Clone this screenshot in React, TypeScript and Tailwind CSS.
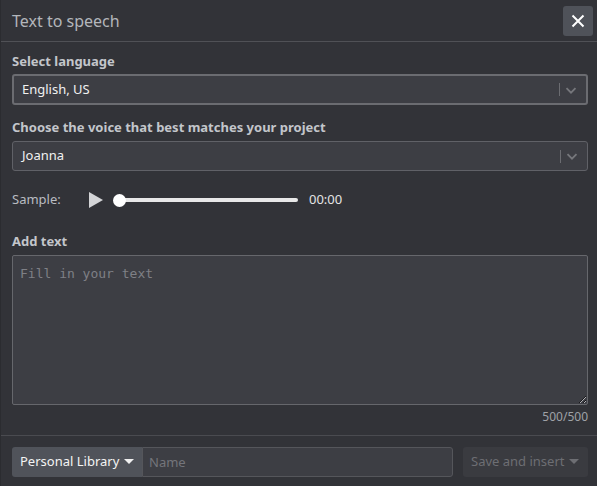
import React from "react";

const font = { fontFamily: '"Segoe UI", "Noto Sans", sans-serif' };

function Chevron() {
  return (
    <div className="flex items-center h-full pr-[6px]">
      <div className="w-px h-[13px] bg-[#6b6c71]" />
      <svg width="18" height="18" viewBox="0 0 20 20" className="ml-[2px]">
        <path d="M5 8 L10 13 L15 8" fill="none" stroke="#76777c" strokeWidth="2" />
      </svg>
    </div>
  );
}

function Select({ value, thick }: { value: string; thick?: boolean }) {
  return (
    <div
      className={`flex items-center justify-between bg-[#3d3e44] rounded-[3px] ${
        thick ? "border-2 border-[#6b6c71] h-[31px]" : "border border-[#606167] h-[30px]"
      }`}
    >
      <span className={`text-[13px] text-[#f1f1f1] ${thick ? "pl-[8px]" : "pl-[9px]"}`}>{value}</span>
      <Chevron />
    </div>
  );
}

export default function App() {
  return (
    <div style={font} className="w-[597px] h-[486px] bg-[#323338] border-l border-[#2b2c30] flex flex-col">
      <div className="h-[42px] flex items-center justify-between pl-[11px] pr-[4px] border-b border-[#505156]">
        <span className="text-[16px] text-[#b3b6bb]">Text to speech</span>
        <button className="w-[30px] h-[30px] rounded-[3px] bg-[#4f5259] flex items-center justify-center">
          <svg width="14" height="14" viewBox="0 0 14 14">
            <path d="M1.5 1.5 L12.5 12.5 M12.5 1.5 L1.5 12.5" stroke="#ffffff" strokeWidth="2" />
          </svg>
        </button>
      </div>
      <div className="flex flex-col pl-[11px] pr-[9px]">
        <div className="mt-[10px] text-[13px] font-bold text-[#c3c6cb] leading-[18px]">Select language</div>
        <div className="mt-[4px]">
          <Select value="English, US" thick />
        </div>
        <div className="mt-[13px] text-[13px] font-bold text-[#c3c6cb] leading-[18px]">
          Choose the voice that best matches your project
        </div>
        <div className="mt-[5px]">
          <Select value="Joanna" />
        </div>
        <div className="mt-[14px] h-[30px] flex items-center">
          <span className="text-[13px] text-[#b9bcc1] w-[76px]">Sample:</span>
          <svg width="16" height="16" viewBox="0 0 16 16">
            <path d="M1 0 L15 8 L1 16 Z" fill="#d4d5d7" />
          </svg>
          <div className="relative ml-[9px] w-[185px] h-[12px] flex items-center">
            <div className="absolute left-[6px] right-0 h-[4px] bg-[#e8e8e8] rounded-full" />
            <div className="absolute left-0 w-[13px] h-[13px] rounded-full bg-white" />
          </div>
          <span className="ml-[11px] text-[13px] text-[#e4e4e4]">00:00</span>
        </div>
        <div className="mt-[17px] text-[13px] font-bold text-[#c3c6cb] leading-[18px]">Add text</div>
        <textarea
          placeholder="Fill in your text"
          className="mt-[5px] h-[150px] bg-[#3d3e44] border border-[#66676c] rounded-[2px] px-[7px] py-[8px] text-[13px] text-[#e0e0e0] placeholder:text-[#7f8086] outline-none"
          style={{ fontFamily: '"DejaVu Sans Mono", "Liberation Mono", monospace' }}
        />
        <div className="text-right text-[12px] text-[#9fa2a7] mt-[4px] leading-[16px]">500/500</div>
      </div>
      <div className="mt-[10px] border-t border-[#4a4b50]" />
      <div className="flex items-center pl-[11px] pr-[9px] mt-[11px] h-[30px]">
        <button className="h-[30px] w-[130px] bg-[#50535a] rounded-l-[3px] flex items-center pl-[8px] text-[13px] text-[#f4f4f4]">
          Personal Library
          <svg width="10" height="6" viewBox="0 0 10 6" className="ml-[5px]">
            <path d="M0 0 L10 0 L5 5 Z" fill="#f0f0f0" />
          </svg>
        </button>
        <input
          placeholder="Name"
          className="h-[30px] w-[311px] bg-[#3d3e44] border border-[#55565b] rounded-r-[3px] pl-[6px] text-[13px] text-white placeholder:text-[#74757b] outline-none"
        />
        <button className="ml-[10px] h-[30px] w-[125px] bg-[#3a3b40] rounded-[3px] flex items-center justify-between pl-[8px] pr-[9px] text-[13px] text-[#6d6e73]">
          Save and insert
          <svg width="10" height="6" viewBox="0 0 10 6">
            <path d="M0 0 L10 0 L5 5 Z" fill="#6d6e73" />
          </svg>
        </button>
      </div>
    </div>
  );
}
